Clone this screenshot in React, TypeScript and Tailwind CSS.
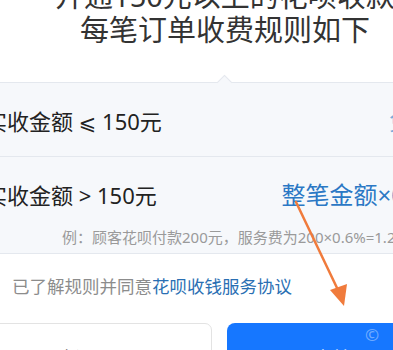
import React from "react";

const App: React.FC = () => {
  return (
    <div className="relative h-[350px] w-[393px] overflow-hidden bg-white font-['Noto_Sans','Noto_Sans_CJK_SC',sans-serif]">
      {/* heading */}
      <div className="mt-[-21px] w-[450px] text-center text-[29px] leading-[34px] text-[#333]">
        <div className="whitespace-nowrap">开通150元以上的花呗收款</div>
        <div className="whitespace-nowrap">每笔订单收费规则如下</div>
      </div>

      <div className="ml-[-30px] w-[485px]">
        {/* rules panel */}
        <div className="relative mt-[35px] border-y border-[#e4e8ee] bg-[#f6f8fb]">
          <div className="absolute left-[249px] top-[-6px] h-[11px] w-[11px] rotate-45 border-l border-t border-[#e4e8ee] bg-[#f6f8fb]" />
          <div className="flex h-[73px] items-center justify-between pl-[15px] pr-[18px] pt-[3px] text-[22px] leading-[30px]">
            <span className="text-[#222]">
              实收金额 <span className="font-['DejaVu_Sans',sans-serif] text-[21px] leading-none">⩽</span> 150元
            </span>
            <span className="text-[24px] text-[#2b78c5]/60">免费</span>
          </div>
          <div className="border-t border-[#e4e8ee] pb-[6px] pl-[15px] pr-[10px] pt-[23px]">
            <div className="flex items-center justify-between text-[22px] leading-[30px]">
              <span className="text-[#222]">实收金额 &gt; 150元</span>
              <span className="text-[24px] text-[#2b78c5]">整笔金额×0.6%</span>
            </div>
            <div className="mt-[17px] whitespace-nowrap pl-[77px] text-[15px] leading-[20px] text-[#9a9a9a]">
              例：顾客花呗付款200元，服务费为200×0.6%=1.2元
            </div>
          </div>
        </div>

        {/* agreement */}
        <div className="mt-[20px] pl-[42px] text-[17.5px] leading-[24px] text-[#8c8c8c]">
          已了解规则并同意<span className="text-[#2a6fb3]">花呗收钱服务协议</span>
        </div>

        {/* buttons */}
        <div className="mt-[25px] flex gap-[15px] pl-[14px]">
          <button className="flex h-[60px] w-[233px] justify-center rounded-[7px] border border-[#e3e3e3] bg-white pt-[22px] text-[18px] leading-[24px] text-[#333]">
            暂不开通
          </button>
          <button className="relative flex h-[60px] w-[233px] justify-center rounded-[8px] bg-[#1677ff] pt-[23px] text-[18px] leading-[24px] text-white">
            同意并开通
            <span className="absolute left-[138px] top-[3px] text-[17px] leading-none text-white/40">©</span>
          </button>
        </div>
      </div>

      {/* orange annotation arrow */}
      <svg
        className="pointer-events-none absolute left-0 top-0"
        width="393"
        height="350"
        viewBox="0 0 393 350"
      >
        <line x1="296" y1="202" x2="338" y2="290" stroke="#f07b3c" strokeWidth="2.5" strokeLinecap="round" />
        <polygon points="344,306 330,290 347,284" fill="#f07b3c" />
      </svg>
    </div>
  );
};

export default App;
